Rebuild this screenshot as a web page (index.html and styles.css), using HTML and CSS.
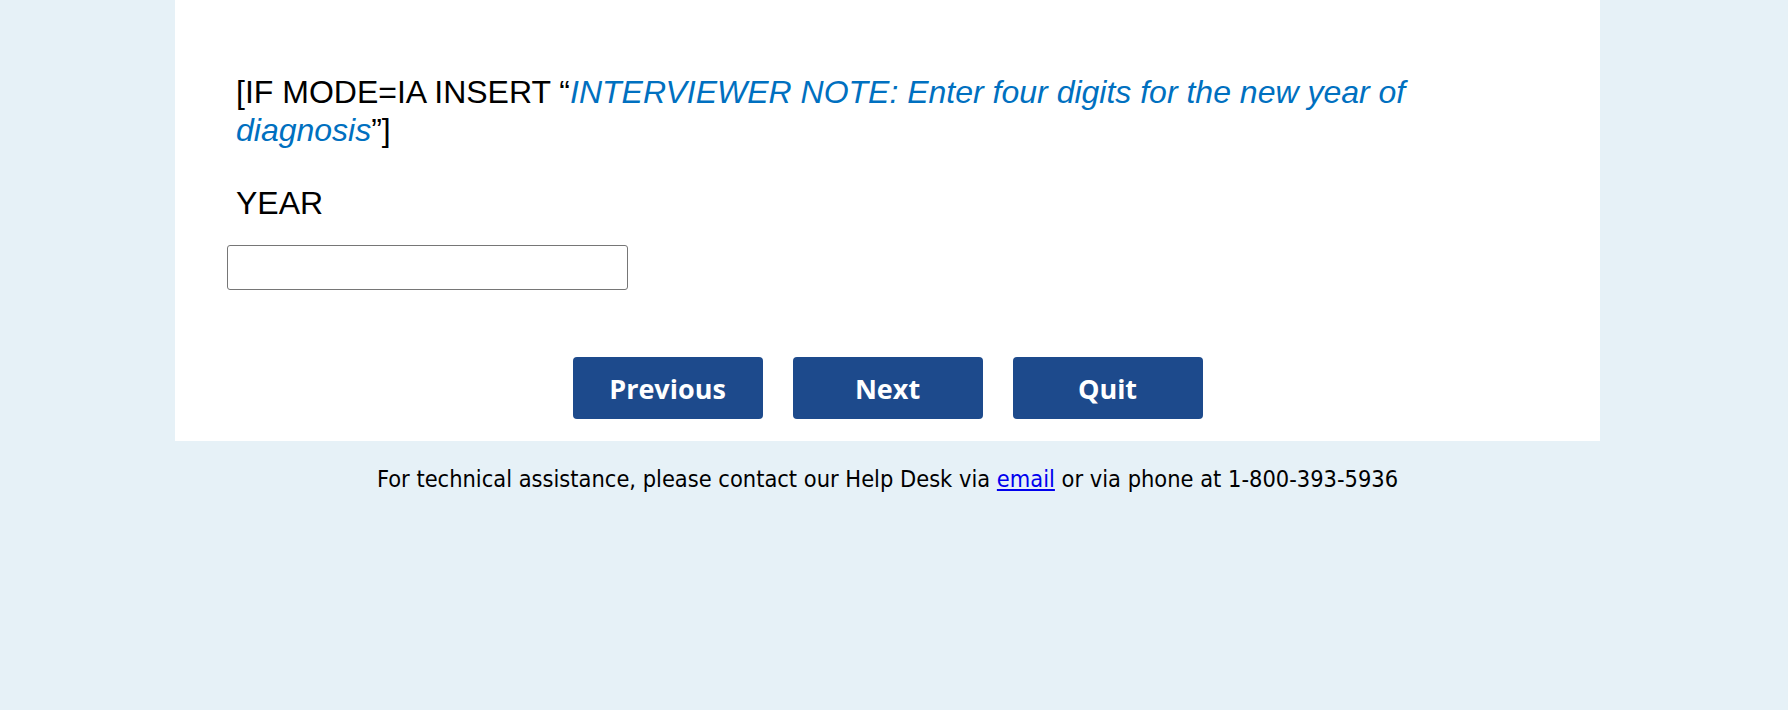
FILE: index.html
```
<!DOCTYPE html>
<html lang="en">
<head>
  <meta charset="UTF-8">
  <meta name="viewport" content="width=device-width, initial-scale=1.0">
  <title>Survey - Year of Diagnosis</title>
  <link rel="stylesheet" href="styles.css">
</head>
<body>
  <form name="surveyPage" class="panel">
    <!-- Question -->
    <p class="question">[IF MODE=IA INSERT “<em class="note">INTERVIEWER NOTE: Enter four digits for the new year of diagnosis</em>”]</p>
    <label class="field-label" for="year">YEAR</label>
    <input class="year-input" type="text" name="year" id="year" />
    <!-- Navigation -->
    <div class="nav">
      <button type="button" class="nav-btn">Previous</button>
      <button type="button" class="nav-btn">Next</button>
      <button type="button" class="nav-btn">Quit</button>
    </div>
  </form>
  <p class="help">For technical assistance, please contact our Help Desk via <a href="#">email</a> or via phone at 1-800-393-5936</p>
</body>
</html>
```

FILE: styles.css
```
html {
  font: 100%/1.0 "Liberation Sans", Arial, sans-serif;
}
body {
  margin: 0;
  padding: 0;
  min-height: 100vh;
  background: #e6f1f7;
}
.panel {
  display: block;
  width: 1425px;
  margin-left: 175px;
  box-sizing: border-box;
  padding: 73px 52px 22px 52px;
  background: #fff;
}
.question {
  margin: 0 0 35px 9px;
  max-width: 1250px;
  font-size: 32px;
  line-height: 38px;
  color: #000;
}
.note {
  color: #0070c0;
}
.field-label {
  display: block;
  margin-left: 9px;
  font-size: 32px;
  line-height: 38px;
}
.year-input {
  display: block;
  box-sizing: border-box;
  width: 401px;
  height: 45px;
  margin-top: 23px;
  border: 1px solid #767676;
  border-radius: 3px;
  font-size: 20px;
}
.nav {
  display: flex;
  justify-content: center;
  gap: 30px;
  margin-top: 67px;
}
.nav-btn {
  width: 190px;
  height: 62px;
  border: 0;
  border-radius: 4px;
  background: #1d4a8c;
  color: #fff;
  font: 700 27px/1 "Open Sans", sans-serif;
}
.help {
  width: 1425px;
  margin: 0 0 0 175px;
  padding-top: 23px;
  text-align: center;
  font: 23.4px/30px "DejaVu Sans Condensed", "DejaVu Sans", sans-serif;
  color: #000;
}
.help a {
  color: #0000ee;
}
```
